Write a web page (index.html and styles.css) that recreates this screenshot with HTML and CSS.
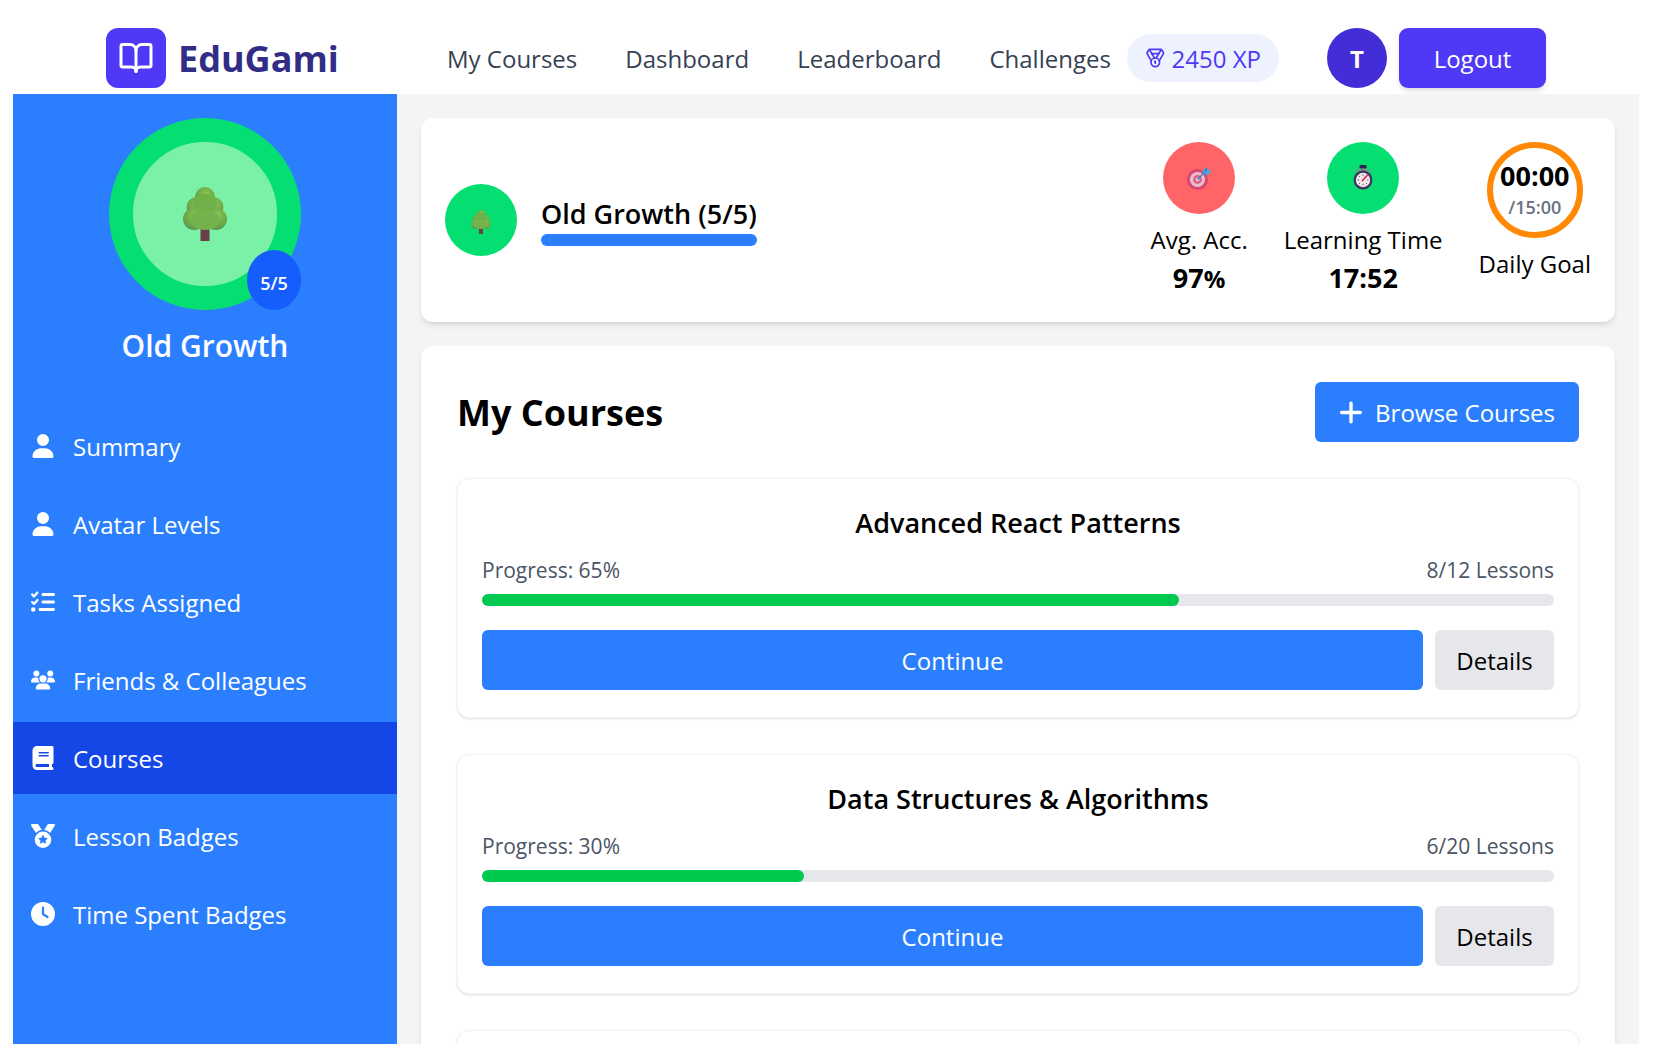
FILE: index.html
```html
<!DOCTYPE html>
<html lang="en">
<head>
    <meta charset="UTF-8">
    <meta name="viewport" content="width=device-width, initial-scale=1.0">
    <title>EduGami</title>
    <link rel="stylesheet" href="styles.css">
</head>
<body>
    <!-- shared icon shapes -->
    <svg class="sprite" aria-hidden="true">
        <defs>
            <radialGradient id="leaf" cx="55%" cy="35%" r="70%">
                <stop offset="0" stop-color="#8cc653"/>
                <stop offset="0.65" stop-color="#68a946"/>
                <stop offset="1" stop-color="#5a8f5c"/>
            </radialGradient>
            <symbol id="tree" viewBox="0 0 44 54">
                <rect x="17.5" y="40" width="9" height="14" fill="#6b3f47"/>
                <circle cx="22" cy="10" r="10" fill="url(#leaf)"/>
                <circle cx="13.5" cy="20" r="10" fill="url(#leaf)"/>
                <circle cx="30.5" cy="20" r="10" fill="url(#leaf)"/>
                <ellipse cx="22" cy="18" rx="12" ry="11" fill="#6fb049"/>
                <circle cx="11" cy="32" r="11" fill="url(#leaf)"/>
                <circle cx="33" cy="32" r="11" fill="url(#leaf)"/>
                <ellipse cx="22" cy="33" rx="15" ry="10" fill="#74b34b"/>
            </symbol>
            <symbol id="i-user" viewBox="0 0 448 512">
                <path d="M224 256A128 128 0 1 0 224 0a128 128 0 1 0 0 256zm-45.7 48C79.8 304 0 383.8 0 482.3C0 498.7 13.3 512 29.7 512H418.3c16.4 0 29.7-13.3 29.7-29.7C448 383.8 368.2 304 269.7 304H178.3z"/>
            </symbol>
            <symbol id="i-tasks" viewBox="0 0 512 512">
                <path d="M152.1 38.2c9.9 8.9 10.7 24 1.8 33.9l-72 80c-4.4 4.9-10.6 7.8-17.2 7.9s-12.9-2.4-17.6-7L7 113C-2.3 103.6-2.3 88.4 7 79s24.6-9.4 33.9 0l22.1 22.1 55.1-61.2c8.9-9.9 24-10.7 33.9-1.8zm0 160c9.9 8.9 10.7 24 1.8 33.9l-72 80c-4.4 4.9-10.6 7.8-17.2 7.9s-12.9-2.4-17.6-7L7 273c-9.4-9.4-9.4-24.6 0-33.9s24.6-9.4 33.9 0l22.1 22.1 55.1-61.2c8.9-9.9 24-10.7 33.9-1.8zM224 96c0-17.7 14.3-32 32-32H480c17.7 0 32 14.3 32 32s-14.3 32-32 32H256c-17.7 0-32-14.3-32-32zm0 160c0-17.7 14.3-32 32-32H480c17.7 0 32 14.3 32 32s-14.3 32-32 32H256c-17.7 0-32-14.3-32-32zM160 416c0-17.7 14.3-32 32-32H480c17.7 0 32 14.3 32 32s-14.3 32-32 32H192c-17.7 0-32-14.3-32-32zM48 368a48 48 0 1 1 0 96 48 48 0 1 1 0-96z"/>
            </symbol>
            <symbol id="i-users" viewBox="0 0 640 512">
                <path d="M144 0a80 80 0 1 1 0 160A80 80 0 1 1 144 0zM512 0a80 80 0 1 1 0 160A80 80 0 1 1 512 0zM0 298.7C0 239.8 47.8 192 106.7 192h42.7c15.9 0 31 3.5 44.6 9.7c-1.3 7.2-1.9 14.7-1.9 22.3c0 38.2 16.8 72.5 43.3 96c-.2 0-.4 0-.7 0H21.3C9.6 320 0 310.4 0 298.7zM405.3 320c-.2 0-.4 0-.7 0c26.6-23.5 43.3-57.8 43.3-96c0-7.6-.7-15-1.9-22.3c13.6-6.3 28.7-9.7 44.6-9.7h42.7C592.2 192 640 239.8 640 298.7c0 11.8-9.6 21.3-21.3 21.3H405.3zM224 224a96 96 0 1 1 192 0 96 96 0 1 1 -192 0zM128 485.3C128 411.7 187.7 352 261.3 352H378.7C452.3 352 512 411.7 512 485.3c0 14.7-11.9 26.7-26.7 26.7H154.7c-14.7 0-26.7-11.9-26.7-26.7z"/>
            </symbol>
            <symbol id="i-book" viewBox="0 0 448 512">
                <path d="M96 0C43 0 0 43 0 96V416c0 53 43 96 96 96H384h32c17.7 0 32-14.3 32-32s-14.3-32-32-32V384c17.7 0 32-14.3 32-32V32c0-17.7-14.3-32-32-32H384 96zm0 384H352v64H96c-17.7 0-32-14.3-32-32s14.3-32 32-32zm32-240c0-8.8 7.2-16 16-16H336c8.8 0 16 7.2 16 16s-7.2 16-16 16H144c-8.8 0-16-7.2-16-16zm16 48H336c8.8 0 16 7.2 16 16s-7.2 16-16 16H144c-8.8 0-16-7.2-16-16s7.2-16 16-16z"/>
            </symbol>
            <symbol id="i-medal" viewBox="0 0 512 512">
                <path d="M4.1 38.2C1.4 34.2 0 29.4 0 24.6C0 11 11 0 24.6 0H133.9c11.2 0 21.7 5.9 27.4 15.5l68.5 114.1c-48.2 6.1-91.3 28.6-123.4 61.9L4.1 38.2zm503.7 0L405.6 191.5c-32.1-33.3-75.2-55.8-123.4-61.9L350.7 15.5C356.5 5.9 366.9 0 378.1 0H487.4C501 0 512 11 512 24.6c0 4.8-1.4 9.6-4.1 13.6zM80 336a176 176 0 1 1 352 0A176 176 0 1 1 80 336zm184.4-94.9c-3.4-7-13.3-7-16.8 0l-22.4 45.4c-1.4 2.8-4 4.7-7 5.1L168 298.9c-7.7 1.1-10.7 10.5-5.2 16l36.3 35.4c2.2 2.2 3.2 5.2 2.7 8.3l-8.6 49.9c-1.3 7.6 6.7 13.5 13.6 9.9l44.8-23.6c2.7-1.4 6-1.4 8.7 0l44.8 23.6c6.9 3.6 14.9-2.2 13.6-9.9l-8.6-49.9c-.5-3 .5-6.1 2.7-8.3l36.3-35.4c5.6-5.4 2.5-14.8-5.2-16l-50.1-7.3c-3-.4-5.7-2.4-7-5.1l-22.4-45.4z"/>
            </symbol>
            <symbol id="i-clock" viewBox="0 0 512 512">
                <path d="M256 0a256 256 0 1 1 0 512A256 256 0 1 1 256 0zM232 120V256c0 8 4 15.5 10.7 20l96 64c11 7.4 25.9 4.4 33.3-6.7s4.4-25.9-6.7-33.3L280 243.2V120c0-13.3-10.7-24-24-24s-24 10.7-24 24z"/>
            </symbol>
        </defs>
    </svg>

    <header class="topbar">
        <div class="brand">
            <span class="brand-mark">
                <svg viewBox="0 0 24 24" width="36" height="36" fill="none" stroke="#fff" stroke-width="2" stroke-linecap="round" stroke-linejoin="round">
                    <path d="M12 7v14"/>
                    <path d="M3 18a1 1 0 0 1-1-1V4a1 1 0 0 1 1-1h5a4 4 0 0 1 4 4 4 4 0 0 1 4-4h5a1 1 0 0 1 1 1v13a1 1 0 0 1-1 1h-6a3 3 0 0 0-3 3 3 3 0 0 0-3-3z"/>
                </svg>
            </span>
            <span class="brand-name">EduGami</span>
        </div>
        <nav class="topnav">
            <a>My Courses</a>
            <a>Dashboard</a>
            <a>Leaderboard</a>
            <a>Challenges</a>
        </nav>
        <div class="xp-pill">
            <svg viewBox="0 0 24 24" width="24" height="24" fill="none" stroke="currentColor" stroke-width="2" stroke-linecap="round" stroke-linejoin="round">
                <path d="M7.21 15 2.66 7.14a2 2 0 0 1 .13-2.2L4.4 2.8A2 2 0 0 1 6 2h12a2 2 0 0 1 1.6.8l1.6 2.14a2 2 0 0 1 .14 2.2L16.79 15"/>
                <path d="M11 12 5.12 2.2"/>
                <path d="m13 12 5.88-9.8"/>
                <path d="M8 7h8"/>
                <circle cx="12" cy="17" r="5"/>
                <path d="M12 18v-2h-.5"/>
            </svg>
            <span>2450 XP</span>
        </div>
        <div class="user-avatar">T</div>
        <button class="logout-btn">Logout</button>
    </header>

    <div class="layout">
        <aside class="sidebar">
            <div class="level-avatar">
                <div class="level-ring">
                    <svg class="tree-big"><use href="#tree"/></svg>
                </div>
                <span class="level-badge">5/5</span>
            </div>
            <h2 class="level-name">Old Growth</h2>
            <ul class="side-menu">
                <li class="side-item"><svg class="side-icon"><use href="#i-user"/></svg>Summary</li>
                <li class="side-item"><svg class="side-icon"><use href="#i-user"/></svg>Avatar Levels</li>
                <li class="side-item"><svg class="side-icon"><use href="#i-tasks"/></svg>Tasks Assigned</li>
                <li class="side-item"><svg class="side-icon"><use href="#i-users"/></svg>Friends &amp; Colleagues</li>
                <li class="side-item active"><svg class="side-icon"><use href="#i-book"/></svg>Courses</li>
                <li class="side-item"><svg class="side-icon"><use href="#i-medal"/></svg>Lesson Badges</li>
                <li class="side-item"><svg class="side-icon"><use href="#i-clock"/></svg>Time Spent Badges</li>
            </ul>
        </aside>

        <main class="content">
            <section class="card status-card">
                <div class="status-level">
                    <div class="stat-circle green">
                        <svg class="tree-small"><use href="#tree"/></svg>
                    </div>
                    <div class="status-title">
                        <div class="status-name">Old Growth (5/5)</div>
                        <div class="status-bar"></div>
                    </div>
                </div>
                <div class="stats">
                    <div class="stat">
                        <div class="stat-circle red">
                            <svg viewBox="0 0 25 24" width="25" height="24">
                                <circle cx="10.5" cy="13.5" r="10.5" fill="#d9476f"/>
                                <circle cx="10.5" cy="13.5" r="7.6" fill="#e9bfd0"/>
                                <circle cx="10.5" cy="13.5" r="4.4" fill="#dc5f84"/>
                                <circle cx="10.5" cy="13.5" r="2" fill="#efc9d7"/>
                                <path d="M10.5 13.5 19 5" stroke="#3f89c9" stroke-width="1.6"/>
                                <path d="M15 5.5 19 1l1.5 2.5L24.5 5 20 9.5z" fill="#4aa3e6"/>
                                <path d="M17 7.5 19 1l1.5 2.5z" fill="#2f7fc4"/>
                            </svg>
                        </div>
                        <div class="stat-label">Avg. Acc.</div>
                        <div class="stat-value">97<span class="stat-unit">%</span></div>
                    </div>
                    <div class="stat">
                        <div class="stat-circle green">
                            <svg viewBox="0 0 20 25" width="20" height="25">
                                <rect x="6.5" y="0" width="7" height="3.4" rx="1" fill="#2c2350"/>
                                <rect x="8.8" y="3" width="2.4" height="2.4" fill="#6f6a7c"/>
                                <path d="M2 7 4 5h12l2 2" fill="none" stroke="#8d8897" stroke-width="1.4"/>
                                <circle cx="10" cy="15" r="9.4" fill="#40305f"/>
                                <circle cx="10" cy="15" r="7.2" fill="#efe9ee"/>
                                <path d="M4.5 15h1.6M14 15h1.6M10 9.5v1.6M10 18.9v1.6M6 11l1 1M6 19l1-1M14 19l-1-1" stroke="#6a5f78" stroke-width="1"/>
                                <path d="M9.4 15.6 14.6 10" stroke="#e0264b" stroke-width="1.6" stroke-linecap="round"/>
                            </svg>
                        </div>
                        <div class="stat-label">Learning Time</div>
                        <div class="stat-value">17:52</div>
                    </div>
                    <div class="stat">
                        <div class="goal-ring">
                            <span class="goal-time">00:00</span>
                            <span class="goal-total">/15:00</span>
                        </div>
                        <div class="stat-label">Daily Goal</div>
                    </div>
                </div>
            </section>

            <section class="card courses-card">
                <div class="courses-head">
                    <h1 class="courses-title">My Courses</h1>
                    <button class="browse-btn">
                        <svg viewBox="0 0 448 512" width="24" height="27" fill="#fff"><path d="M256 80c0-17.7-14.3-32-32-32s-32 14.3-32 32V224H48c-17.7 0-32 14.3-32 32s14.3 32 32 32H192V432c0 17.7 14.3 32 32 32s32-14.3 32-32V288H400c17.7 0 32-14.3 32-32s-14.3-32-32-32H256V80z"/></svg>
                        Browse Courses
                    </button>
                </div>

                <article class="course">
                    <h3 class="course-title">Advanced React Patterns</h3>
                    <div class="course-meta"><span>Progress: 65%</span><span>8/12 Lessons</span></div>
                    <div class="track"><div class="fill" style="width: 65%"></div></div>
                    <div class="course-actions">
                        <button class="continue-btn">Continue</button>
                        <button class="details-btn">Details</button>
                    </div>
                </article>

                <article class="course">
                    <h3 class="course-title">Data Structures &amp; Algorithms</h3>
                    <div class="course-meta"><span>Progress: 30%</span><span>6/20 Lessons</span></div>
                    <div class="track"><div class="fill" style="width: 30%"></div></div>
                    <div class="course-actions">
                        <button class="continue-btn">Continue</button>
                        <button class="details-btn">Details</button>
                    </div>
                </article>

                <article class="course course-next"></article>
            </section>
        </main>
    </div>
</body>
</html>
```

FILE: styles.css
```css
:root {
    --indigo: #4f39f6;
    --indigo-dark: #432dd7;
    --indigo-deep: #312c85;
    --blue: #2b7fff;
    --blue-dark: #1447e6;
    --blue-mid: #155dfc;
    --green: #05df72;
    --green-light: #7bf1a8;
    --bar-green: #00c950;
    --gray-bg: #f3f4f6;
    --gray-200: #e5e7eb;
}

* {
    box-sizing: border-box;
}

html, body {
    height: 1044px;
    overflow: hidden;
}

body {
    margin: 0;
    background: #fff;
    color: #000;
    font-family: "Open Sans", "Noto Sans", sans-serif;
    font-size: 24px;
    font-stretch: 94%;
}

button {
    font: inherit;
    font-stretch: inherit;
    border: none;
    cursor: pointer;
}

.sprite {
    position: absolute;
    width: 0;
    height: 0;
}

/* Top bar */
.topbar {
    display: flex;
    align-items: center;
    height: 94px;
    padding: 22px 0 0 106px;
}

.brand {
    display: flex;
    align-items: center;
    gap: 12px;
    width: 341px;
}

.brand-mark {
    display: flex;
    align-items: center;
    justify-content: center;
    width: 60px;
    height: 60px;
    background: var(--indigo);
    border-radius: 12px;
}

.brand-name {
    color: var(--indigo-deep);
    font-size: 36px;
    font-weight: 700;
}

.topnav {
    display: flex;
    gap: 48px;
    width: 680px;
    color: #364153;
}

.xp-pill {
    display: flex;
    align-items: center;
    gap: 6px;
    height: 48px;
    width: 152px;
    padding: 0 18px;
    background: #eef2ff;
    border-radius: 24px;
    color: var(--indigo);
    white-space: nowrap;
}

.user-avatar {
    display: flex;
    align-items: center;
    justify-content: center;
    width: 60px;
    height: 60px;
    margin-left: 48px;
    background: var(--indigo-dark);
    border-radius: 50%;
    color: #fff;
    font-weight: 700;
}

.logout-btn {
    width: 147px;
    height: 60px;
    margin-left: 12px;
    background: var(--indigo);
    border-radius: 9px;
    color: #fff;
    box-shadow: 0 4px 6px -1px rgba(0,0,0,0.1), 0 2px 4px -2px rgba(0,0,0,0.1);
}

/* Page layout */
.layout {
    display: flex;
    height: 950px;
    margin: 0 26px 0 13px;
}

.sidebar {
    flex: 0 0 384px;
    padding-top: 24px;
    background: var(--blue);
    color: #fff;
}

.level-avatar {
    position: relative;
    width: 192px;
    margin: 0 auto;
}

.level-ring {
    display: flex;
    align-items: center;
    justify-content: center;
    width: 192px;
    height: 192px;
    background: var(--green-light);
    border: 24px solid var(--green);
    border-radius: 50%;
}

.tree-big {
    width: 44px;
    height: 54px;
}

.level-badge {
    position: absolute;
    right: 0;
    bottom: 0;
    display: flex;
    align-items: center;
    justify-content: center;
    width: 54px;
    height: 60px;
    padding-top: 6px;
    background: var(--blue-mid);
    border-radius: 27px / 30px;
    font-size: 18px;
    font-weight: 600;
}

.level-name {
    margin: 13px 0 0;
    font-size: 30px;
    font-weight: 600;
    line-height: 45px;
    text-align: center;
}

.side-menu {
    display: flex;
    flex-direction: column;
    gap: 6px;
    margin: 42px 0 0;
    padding: 0;
    list-style: none;
}

.side-item {
    display: flex;
    align-items: center;
    gap: 18px;
    height: 72px;
    padding: 0 18px;
}

.side-item.active {
    background: var(--blue-dark);
}

.side-icon {
    flex: 0 0 24px;
    width: 24px;
    height: 24px;
    fill: #fff;
}

.content {
    flex: 1;
    padding: 24px;
    background: var(--gray-bg);
    overflow: hidden;
}

.card {
    background: #fff;
    border-radius: 12px;
    box-shadow: 0 4px 6px -1px rgba(0,0,0,0.1), 0 2px 4px -2px rgba(0,0,0,0.1);
}

/* Status card */
.status-card {
    display: flex;
    align-items: center;
    justify-content: space-between;
    height: 204px;
    padding: 24px;
}

.status-level {
    display: flex;
    align-items: center;
    gap: 24px;
}

.stat-circle {
    display: flex;
    align-items: center;
    justify-content: center;
    width: 72px;
    height: 72px;
    border-radius: 50%;
}

.stat-circle.green {
    background: var(--green);
}

.stat-circle.red {
    background: #ff6467;
}

.tree-small {
    width: 20px;
    height: 24px;
    margin-top: 4px;
}

.status-title {
    display: inline-block;
}

.status-name {
    font-size: 27px;
    font-weight: 600;
    line-height: 40px;
    white-space: nowrap;
}

.status-bar {
    height: 12px;
    background: var(--blue);
    border-radius: 6px;
}

.stats {
    display: flex;
    align-items: flex-start;
    gap: 36px;
}

.stat {
    display: flex;
    flex-direction: column;
    align-items: center;
}

.stat-label {
    margin-top: 8px;
    line-height: 36px;
    white-space: nowrap;
}

.stat-value {
    font-size: 27px;
    font-weight: 700;
    line-height: 40px;
}

.stat-unit {
    font-size: 24px;
}

.goal-ring {
    display: flex;
    flex-direction: column;
    align-items: center;
    justify-content: center;
    width: 96px;
    height: 96px;
    border: 6px solid #ff8904;
    border-radius: 50%;
}

.goal-time {
    font-size: 27px;
    font-weight: 700;
    line-height: 36px;
}

.goal-total {
    color: #6a7282;
    font-size: 18px;
    font-weight: 600;
    line-height: 27px;
}

/* Courses */
.courses-card {
    height: 1000px;
    margin-top: 24px;
    padding: 36px;
}

.courses-head {
    display: flex;
    align-items: center;
    justify-content: space-between;
    margin-bottom: 36px;
}

.courses-title {
    margin: 0;
    font-size: 36px;
    font-weight: 700;
}

.browse-btn {
    display: flex;
    align-items: center;
    gap: 12px;
    height: 60px;
    padding: 0 24px;
    background: var(--blue);
    border-radius: 6px;
    color: #fff;
}

.course {
    height: 240px;
    margin-bottom: 36px;
    padding: 24px;
    background: #fff;
    border: 1px solid var(--gray-bg);
    border-radius: 12px;
    box-shadow: 0 1px 3px 0 rgba(0,0,0,0.1), 0 1px 2px -1px rgba(0,0,0,0.1);
}

.course-title {
    margin: 0;
    font-size: 27px;
    font-weight: 600;
    line-height: 40px;
    text-align: center;
}

.course-meta {
    display: flex;
    justify-content: space-between;
    margin-top: 12px;
    color: #4a5565;
    font-size: 21px;
    line-height: 31px;
}

.track {
    height: 12px;
    margin-top: 8px;
    background: var(--gray-200);
    border-radius: 6px;
}

.fill {
    height: 100%;
    background: var(--bar-green);
    border-radius: 6px;
}

.course-actions {
    display: flex;
    gap: 12px;
    margin-top: 24px;
}

.continue-btn {
    flex: 1;
    height: 60px;
    background: var(--blue);
    border-radius: 6px;
    color: #fff;
}

.details-btn {
    width: 119px;
    height: 60px;
    background: var(--gray-200);
    border-radius: 6px;
    color: #000;
}
```
